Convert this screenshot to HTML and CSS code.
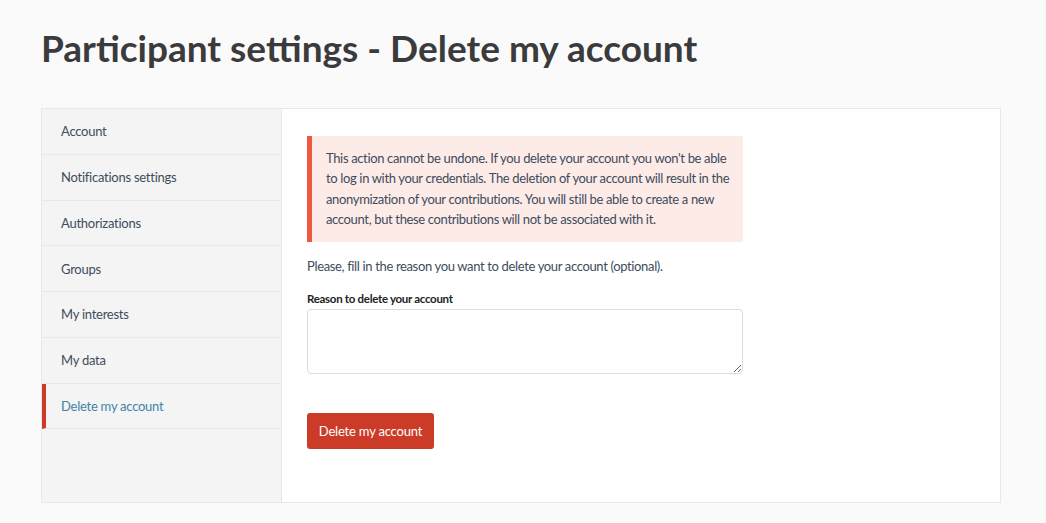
FILE: index.html
```html
<!DOCTYPE html>
<html lang="en">
<head>
<meta charset="utf-8">
<title>Participant settings - Delete my account</title>
<link rel="stylesheet" href="styles.css">
</head>
<body>
<div class="page">
  <h1 class="title">Participant settings - Delete my account</h1>
  <div class="card">
    <nav class="sidebar">
      <a class="nav-item" href="#">Account</a>
      <a class="nav-item" href="#">Notifications settings</a>
      <a class="nav-item" href="#">Authorizations</a>
      <a class="nav-item" href="#">Groups</a>
      <a class="nav-item" href="#">My interests</a>
      <a class="nav-item" href="#">My data</a>
      <a class="nav-item active" href="#">Delete my account</a>
    </nav>
    <main class="main">
      <div class="callout">This action cannot be undone. If you delete your account you won't be able<br>to log in with your credentials. The deletion of your account will result in the<br>anonymization of your contributions. You will still be able to create a new<br>account, but these contributions will not be associated with it.</div>
      <p class="intro">Please, fill in the reason you want to delete your account (optional).</p>
      <label class="label" for="reason">Reason to delete your account</label>
      <textarea class="textarea" id="reason"></textarea>
      <button class="button" type="button">Delete my account</button>
    </main>
  </div>
</div>
</body>
</html>
```

FILE: styles.css
```css
* { box-sizing: border-box; }
html, body { margin: 0; padding: 0; }
body {
  background: #fafafa;
  font-family: Lato, "Noto Sans", sans-serif;
  color: #3e4c5c;
  width: 1046px;
  height: 523px;
  overflow: hidden;
}
.page {
  padding: 25px 45px 0 41px;
}
.title {
  margin: 0 0 37px 0;
  font-size: 37px;
  line-height: 46px;
  font-weight: 700;
  color: #3b3a3d;
  letter-spacing: 0;
}
.card {
  display: flex;
  width: 960px;
  height: 395px;
  border: 1px solid #e8e8e8;
  background: #fff;
}
.sidebar {
  width: 240px;
  flex: 0 0 240px;
  background: #f4f4f4;
  border-right: 1px solid #e8e8e8;
  display: flex;
  flex-direction: column;
}
.nav-item {
  display: flex;
  align-items: center;
  height: 45.75px;
  flex: 0 0 45.75px;
  padding-left: 19px;
  border-bottom: 1px solid #e8e8e8;
  font-size: 13px;
  color: #3e4c5c;
  text-decoration: none;
  letter-spacing: -0.25px;
}
.nav-item.active {
  color: #3f83a8;
  border-left: 4px solid #cf3a27;
  padding-left: 15px;
}
.main {
  flex: 1;
  padding: 27px 26px 0 25px;
  display: flex;
  flex-direction: column;
  align-items: flex-start;
}
.callout {
  width: 436px;
  background: #fdebe8;
  border-left: 5px solid #ec5840;
  padding: 12px 8px 13px 14px;
  font-size: 13px;
  line-height: 20.3px;
  letter-spacing: -0.35px;
  white-space: nowrap;
  color: #3e4c5c;
}
.intro {
  margin: 14px 0 0 0;
  font-size: 13px;
  line-height: 20px;
  letter-spacing: -0.35px;
}
.label {
  margin-top: 15px;
  font-size: 11.5px;
  line-height: 16px;
  font-weight: 700;
  color: #222;
  letter-spacing: -0.3px;
}
.textarea {
  margin-top: 2px;
  width: 436px;
  height: 65px;
  border: 1px solid #dcdcdc;
  border-radius: 4px;
  background: #fff;
  resize: vertical;
  font-family: inherit;
}
.button {
  margin-top: 39px;
  width: 127px;
  height: 36px;
  border: none;
  border-radius: 3px;
  background: #cc3b28;
  color: #fff;
  font-family: inherit;
  font-size: 13px;
  letter-spacing: -0.2px;
  padding: 0;
}
```
